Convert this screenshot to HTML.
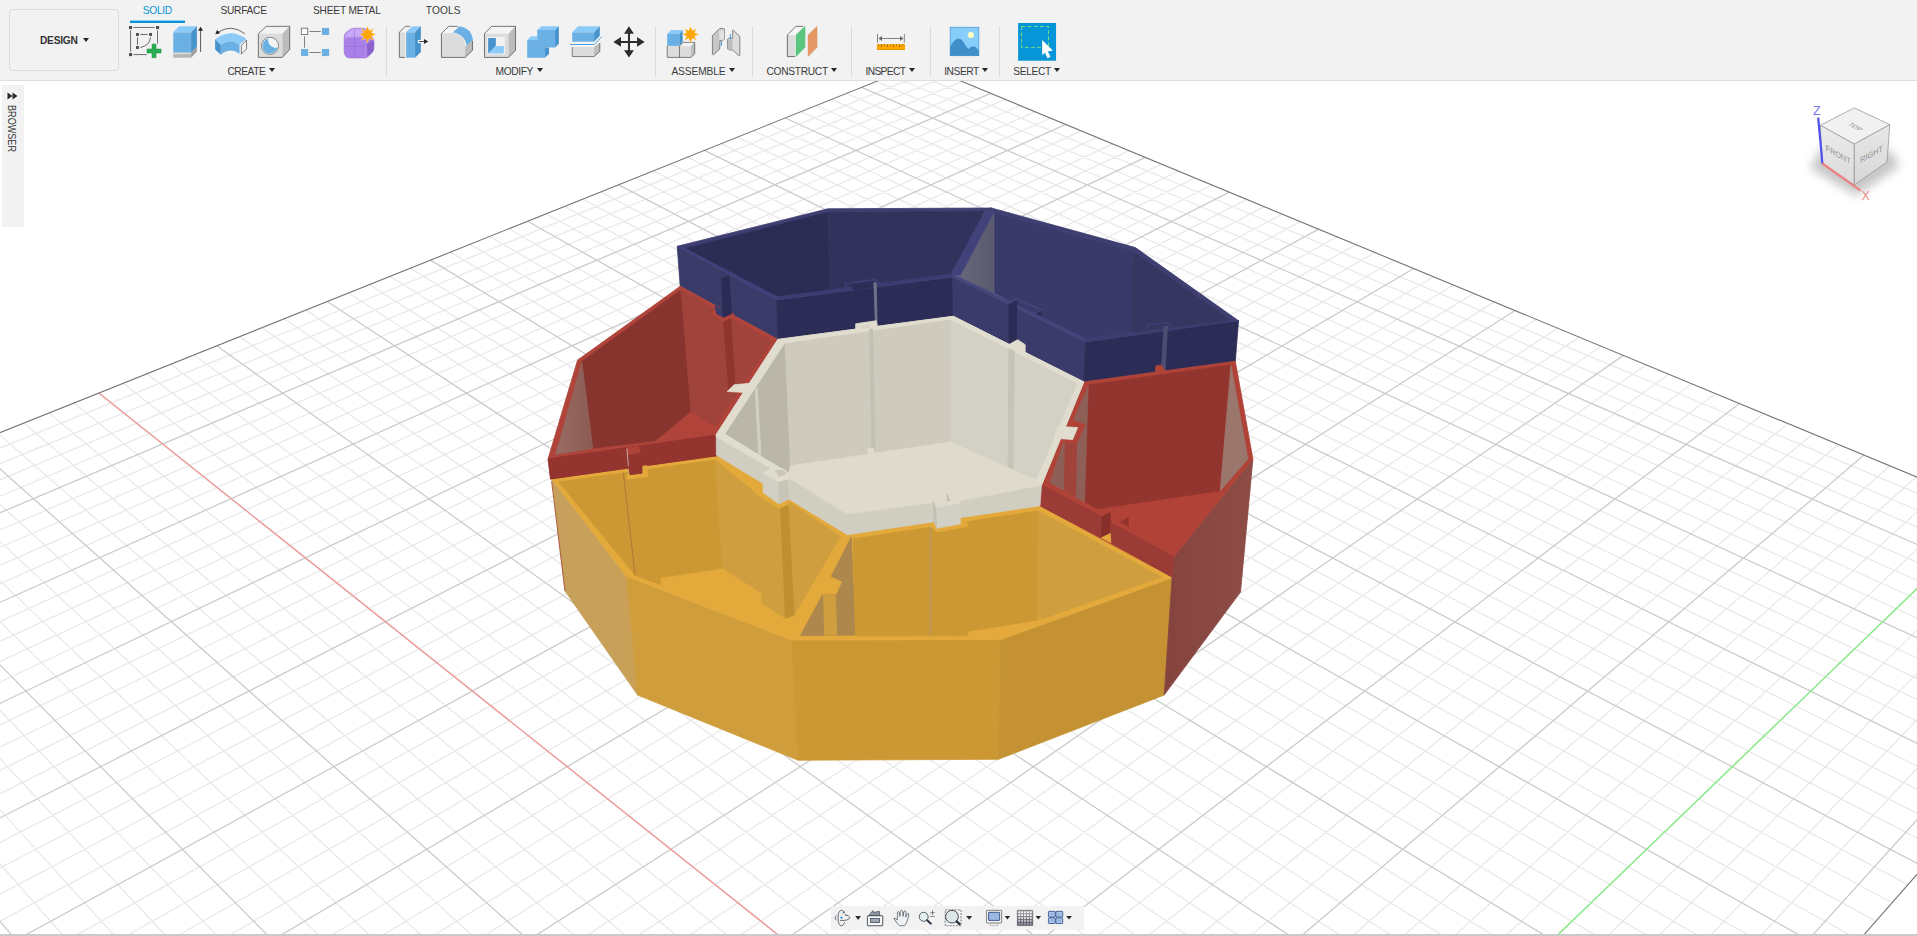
<!DOCTYPE html>
<html lang="en">
<head>
<meta charset="utf-8">
<title>Fusion Design</title>
<style>
html,body{margin:0;padding:0;}
body{width:1917px;height:936px;overflow:hidden;background:#fff;position:relative;font-family:"Liberation Sans",sans-serif;color:#3c3c3c;}
#canvas{position:absolute;left:0;top:0;width:1917px;height:936px;}
#toolbar{position:absolute;left:0;top:0;width:1917px;height:80px;background:#f2f2f2;border-bottom:1px solid #dddddd;box-sizing:content-box;}
.t{position:absolute;font-size:10.2px;line-height:12px;white-space:nowrap;color:#3a3a3a;}
.tab{top:4.9px;}
.grp{top:66px;}
.arr{position:absolute;width:0;height:0;border-left:3.1px solid transparent;border-right:3.1px solid transparent;border-top:4.7px solid #262626;}
.sep{position:absolute;top:26px;width:1.6px;height:50px;background:#dadada;margin-left:-0.5px;}
#design{position:absolute;left:9.3px;top:8.9px;width:110.2px;height:61.8px;border:1.7px solid #dcdcdc;border-radius:5px;box-sizing:border-box;}
.ic{position:absolute;}
#browser{position:absolute;left:2px;top:85px;width:22px;height:142px;background:#f2f2f2;}
#browser .lbl{position:absolute;left:16.1px;top:19.7px;transform-origin:0 0;transform:rotate(90deg) scale(0.866,1);font-size:10.5px;line-height:12px;color:#333;white-space:nowrap;}
#navbar{position:absolute;left:831px;top:906px;width:253px;height:24px;background:#f2f2f2;}
#botbar{position:absolute;left:0;top:934px;width:1917px;height:2px;background:#cacaca;}
</style>
</head>
<body>
<svg id="canvas" width="1917" height="936" viewBox="0 0 1917 936">
<g fill="none" stroke-width="1.3">
<path d="M-342.7 570.0L885.7 2048.0M-281.5 545.5L966.0 1956.6M-251.6 533.5L1004.3 1913.0M-222.1 521.7L1041.6 1870.6M-193.1 510.1L1077.8 1829.4M-136.4 487.4L1147.1 1750.5M-108.7 476.3L1180.3 1712.7M-81.4 465.3L1212.6 1675.9M-54.6 454.5L1244.1 1640.1M-2.0 433.5L1304.5 1571.4M23.8 423.1L1333.6 1538.3M49.1 413.0L1361.9 1506.1M74.1 403.0L1389.5 1474.6M123.1 383.3L1442.7 1414.1M147.0 373.7L1468.3 1385.0M170.7 364.3L1493.3 1356.5M194.0 354.9L1517.8 1328.7M239.6 336.6L1564.9 1275.1M262.0 327.7L1587.7 1249.2M284.1 318.8L1609.9 1223.8M305.8 310.1L1631.7 1199.1M348.5 293.0L1673.8 1151.2M369.4 284.6L1694.1 1128.0M390.1 276.3L1714.0 1105.4M410.5 268.2L1733.5 1083.2M450.5 252.1L1771.3 1040.2M470.1 244.3L1789.7 1019.3M489.5 236.5L1807.6 998.9M508.6 228.8L1825.2 978.9M546.2 213.8L1859.3 940.1M564.6 206.4L1875.9 921.2M582.8 199.1L1892.1 902.7M600.8 191.9L1908.1 884.6M636.2 177.7L1939.0 849.3M653.5 170.8L1954.1 832.2M670.7 163.9L1968.9 815.4M687.6 157.1L1983.4 798.9M720.9 143.7L2011.6 766.8M737.3 137.2L2025.3 751.1M753.5 130.7L2038.8 735.8M769.5 124.3L2052.1 720.7M800.9 111.7L2078.0 691.3M816.4 105.5L2090.5 676.9M831.7 99.4L2102.9 662.8M846.8 93.3L2115.1 649.0M876.5 81.4L2138.8 622.0M891.1 75.5L2150.4 608.8M905.6 69.7L2161.8 595.8M-363.8 595.4L933.8 69.7M-353.3 608.4L947.8 75.6M-342.7 621.6L962.0 81.4M-331.9 635.0L976.4 87.4M-309.8 662.5L1005.5 99.4M-298.4 676.6L1020.3 105.6M-286.9 691.0L1035.3 111.8M-275.1 705.6L1050.5 118.1M-251.0 735.5L1081.3 130.8M-238.6 750.9L1097.0 137.3M-226.0 766.6L1112.9 143.9M-213.2 782.5L1128.9 150.6M-186.8 815.3L1161.6 164.1M-173.3 832.1L1178.2 171.0M-159.5 849.3L1195.0 177.9M-145.4 866.8L1212.0 185.0M-116.5 902.7L1246.7 199.4M-101.6 921.2L1264.4 206.7M-86.4 940.1L1282.2 214.1M-70.9 959.4L1300.3 221.6M-39.0 999.0L1337.2 236.8M-22.5 1019.5L1355.9 244.6M-5.8 1040.3L1375.0 252.5M11.4 1061.6L1394.2 260.5M46.8 1105.6L1433.5 276.7M65.0 1128.3L1453.5 285.0M83.7 1151.5L1473.7 293.4M102.7 1175.2L1494.3 301.9M142.2 1224.1L1536.2 319.3M162.5 1249.5L1557.5 328.1M183.4 1275.4L1579.2 337.1M204.7 1301.9L1601.2 346.2M249.0 1356.9L1646.0 364.7M271.9 1385.3L1668.8 374.2M295.3 1414.5L1692.0 383.8M319.4 1444.4L1715.6 393.6M369.3 1506.4L1763.6 413.5M395.2 1538.7L1788.2 423.6M421.8 1571.7L1813.1 433.9M449.1 1605.6L1838.3 444.4M506.0 1676.3L1890.0 465.8M535.6 1713.0L1916.4 476.7M566.0 1750.8L1943.2 487.8M597.3 1789.7L1970.4 499.1M662.5 1870.8L2026.1 522.2M696.6 1913.2L2054.5 534.0M731.7 1956.8L2083.5 546.0M767.9 2001.7L2112.8 558.1" stroke="#e9e9e9"/>
<path d="M-311.9 557.7L926.4 2001.6M-164.6 498.6L1112.9 1789.4M-28.1 443.9L1274.7 1605.3M98.8 393.1L1416.4 1444.0M216.9 345.7L1541.6 1301.6M327.3 301.5L1652.9 1174.9M430.6 260.1L1752.6 1061.4M527.5 221.3L1842.4 959.3M618.6 184.8L1923.7 866.8M704.4 150.4L1997.6 782.7M785.3 118.0L2065.1 705.8M861.7 87.3L2127.1 635.4M-320.9 648.6L990.9 93.4M-263.2 720.4L1065.8 124.4M-200.1 798.8L1145.2 157.3M-131.1 884.6L1229.3 192.1M-55.1 979.0L1318.6 229.1M28.9 1083.4L1413.7 268.5M122.2 1199.4L1515.1 310.5M226.6 1329.1L1623.4 355.4M344.0 1475.0L1739.4 403.4M477.2 1640.5L1864.0 455.0M629.4 1829.7L1998.0 510.6M805.2 2048.1L2142.7 570.5" stroke="#cbcbcb"/>
<path d="M98.8 393.1L1416.4 1444.0" stroke="#f49a9a"/>
<path d="M629.4 1829.7L1998.0 510.6" stroke="#88f088" stroke-width="1.4"/>
<path d="M-374.1 582.6L919.9 64.0L2173.0 583.1L843.6 2095.9Z" stroke="#747474" stroke-width="1.1"/>
</g>
<g id="model">
<defs>
<linearGradient id="gt1" x1="0" y1="0" x2="1" y2="0"><stop offset="0" stop-color="#67667a"/><stop offset="1" stop-color="#5a596e"/></linearGradient>
<linearGradient id="gr1" x1="0" y1="0" x2="1" y2="0"><stop offset="0" stop-color="#9a6c63"/><stop offset="1" stop-color="#8b5b53"/></linearGradient>
<linearGradient id="gr2" x1="0" y1="0" x2="1" y2="0"><stop offset="0" stop-color="#84443d"/><stop offset="1" stop-color="#8e4c46"/></linearGradient>
<linearGradient id="gy1" x1="0" y1="0" x2="1" y2="0"><stop offset="0" stop-color="#c6a05c"/><stop offset="1" stop-color="#caa057"/></linearGradient>
</defs>
<polygon points="679.2,247.3 827.9,211.5 830.5,290.6 776.6,297.1" fill="#2c2c55" stroke="#2c2c55" stroke-width="0.8" stroke-linejoin="round"/>
<polygon points="827.9,211.5 985.2,210.5 951.9,275.6 830.5,290.6" fill="#32335d" stroke="#32335d" stroke-width="0.8" stroke-linejoin="round"/>
<polygon points="993.9,212.0 1132.9,250.6 1131.6,335.1 1085.3,341.4 993.9,293.1" fill="#3a3a6a" stroke="#3a3a6a" stroke-width="0.8" stroke-linejoin="round"/>
<polygon points="1132.9,250.6 1231.8,320.1 1231.0,323.1 1131.6,335.1" fill="#363661" stroke="#363661" stroke-width="0.8" stroke-linejoin="round"/>
<polygon points="959.1,276.6 993.9,213.0 993.9,294.1" fill="url(#gt1)" stroke="#62617a" stroke-width="0.8" stroke-linejoin="round"/>
<polygon points="950.1,275.6 960.1,275.6 993.9,212.5 986.4,208.8" fill="#42427a" stroke="#42427a" stroke-width="0.8" stroke-linejoin="round"/>
<polygon points="677.2,246.3 827.9,208.8 991.4,208.0 985.2,210.5 827.9,211.5 684.7,248.1" fill="#3e3e71" stroke="#3e3e71" stroke-width="0.8" stroke-linejoin="round"/>
<polygon points="986.4,208.8 991.4,208.0 1135.4,247.6 1238.5,320.7 1231.8,320.6 1132.9,250.6 993.9,212.0" fill="#3e3e71" stroke="#3e3e71" stroke-width="0.8" stroke-linejoin="round"/>
<polygon points="677.2,246.3 776.6,300.0 777.9,339.4 680.2,286.3" fill="#3b3b6a" stroke="#3b3b6a" stroke-width="0.8" stroke-linejoin="round"/>
<polygon points="677.2,246.3 776.6,300.0 777.6,296.9 684.7,248.1" fill="#40407a" stroke="#40407a" stroke-width="0.8" stroke-linejoin="round"/>
<polygon points="721.5,278.8 729.0,275.6 731.5,313.8 723.4,317.3" fill="#2b2c55" stroke="#2b2c55" stroke-width="0.8" stroke-linejoin="round"/>
<polygon points="776.6,300.0 952.8,276.9 953.4,316.3 777.9,339.4" fill="#2c2d56" stroke="#2c2d56" stroke-width="0.8" stroke-linejoin="round"/>
<polygon points="777.6,296.9 951.8,273.9 952.8,276.9 776.6,300.0" fill="#3c3c72" stroke="#3c3c72" stroke-width="0.8" stroke-linejoin="round"/>
<polygon points="853.2,289.8 852.6,285.0 873.9,281.9 874.5,286.9" fill="#2c2d56" stroke="#2c2d56" stroke-width="0.8" stroke-linejoin="round"/>
<polygon points="873.9,282.5 876.2,283.0 877.2,325.1 875.4,325.1" fill="#74738a" stroke="#74738a" stroke-width="0.8" stroke-linejoin="round"/>
<polygon points="952.8,276.9 1085.7,342.0 1083.8,381.9 953.4,316.3" fill="#3a3a6b" stroke="#3a3a6b" stroke-width="0.8" stroke-linejoin="round"/>
<polygon points="952.8,273.9 1085.7,338.5 1085.7,342.0 952.8,276.9" fill="#45457c" stroke="#45457c" stroke-width="0.8" stroke-linejoin="round"/>
<polygon points="1009.1,304.0 1016.6,301.3 1016.6,340.7 1009.1,344.1" fill="#2c2d56" stroke="#2c2d56" stroke-width="0.8" stroke-linejoin="round"/>
<polygon points="1034.6,312.5 1041.5,309.4 1041.5,316.0" fill="#2c2d56" stroke="#2c2d56" stroke-width="0.8" stroke-linejoin="round"/>
<polygon points="1085.7,342.0 1238.5,320.7 1235.3,361.3 1083.8,381.9" fill="#2c2d56" stroke="#2c2d56" stroke-width="0.8" stroke-linejoin="round"/>
<polygon points="1085.7,338.5 1231.8,320.6 1238.5,320.7 1085.7,342.0" fill="#3d3d70" stroke="#3d3d70" stroke-width="0.8" stroke-linejoin="round"/>
<polygon points="1164.0,326.3 1167.5,326.3 1165.2,370.1 1161.5,368.9" fill="#4d4d74" stroke="#4d4d74" stroke-width="0.8" stroke-linejoin="round"/>
<polyline points="845.2,290.0 846.0,283.3 875.3,279.5 880.8,284.5" fill="none" stroke="#40407a" stroke-width="1.3"/>
<polyline points="1009.2,302.1 1016.7,298.8 1041.8,310.1 1034.3,313.1" fill="none" stroke="#45457c" stroke-width="1.3"/>
<polyline points="1146.9,329.6 1148.2,324.3 1168.2,322.6 1172.0,327.6" fill="none" stroke="#40407a" stroke-width="1.3"/>
<polygon points="551.9,479.4 626.4,576.3 637.6,695.1 565.0,591.0" fill="url(#gy1)" stroke="#c8a05a" stroke-width="0.8" stroke-linejoin="round"/>
<polygon points="626.4,576.3 791.6,640.1 797.9,760.2 637.6,695.1" fill="#d09d3c" stroke="#d09d3c" stroke-width="0.8" stroke-linejoin="round"/>
<polygon points="791.6,640.1 1000.7,639.6 998.5,759.3 797.9,760.2" fill="#cb9834" stroke="#cb9834" stroke-width="0.8" stroke-linejoin="round"/>
<polygon points="1000.7,639.6 1172.9,577.5 1164.2,695.1 998.5,759.3" fill="#c49232" stroke="#c49232" stroke-width="0.8" stroke-linejoin="round"/>
<polyline points="551.6,481.0 565.0,591.0" fill="none" stroke="#a8523f" stroke-width="0.9"/>
<polygon points="551.9,479.4 550.6,478.9 717.2,455.7 716.3,455.1 847.6,534.7 1040.0,505.7 1172.1,576.9 1172.9,577.5 1000.7,639.6 791.6,640.1 626.4,576.3" fill="#e3a93b" stroke="#e3a93b" stroke-width="0.8" stroke-linejoin="round"/>
<polygon points="558.8,482.0 715.3,460.1 722.8,568.2 660.2,577.6 660.2,584.5 635.1,575.1" fill="#cb9833" stroke="#cb9833" stroke-width="0.8" stroke-linejoin="round"/>
<polyline points="623.3,472.5 635.1,575.1" fill="none" stroke="#b56a3c" stroke-width="0.8"/>
<polygon points="715.3,460.1 756.6,493.9 780.4,504.6 787.9,501.4 840.5,536.4 794.1,615.2 785.4,618.2 761.6,603.2 761.6,593.2 722.8,568.2" fill="#cf9f3f" stroke="#cf9f3f" stroke-width="0.8" stroke-linejoin="round"/>
<polygon points="780.4,504.6 787.9,501.4 794.1,615.2 785.4,618.2" fill="#c09030" stroke="#c09030" stroke-width="0.8" stroke-linejoin="round"/>
<polygon points="851.2,537.1 855.5,635.1 800.4,635.6 822.4,595.0 836.7,594.7 842.5,581.4 831.2,576.4" fill="#ad874c" stroke="#ad874c" stroke-width="0.8" stroke-linejoin="round"/>
<polygon points="823.4,595.0 835.5,595.0 836.7,635.1 824.7,635.1" fill="#cf9f3f" stroke="#cf9f3f" stroke-width="0.8" stroke-linejoin="round"/>
<polygon points="853.2,539.0 1038.2,511.0 1037.4,620.1 967.6,631.3 967.6,635.8 855.5,635.8" fill="#cb9833" stroke="#cb9833" stroke-width="0.8" stroke-linejoin="round"/>
<polyline points="930.5,527.0 930.5,635.0" fill="none" stroke="#b99a5c" stroke-width="1.6"/>
<polygon points="1038.2,511.0 1161.5,576.9 1038.8,620.1" fill="#cf9f3f" stroke="#cf9f3f" stroke-width="0.8" stroke-linejoin="round"/>
<polygon points="933.3,522.0 936.4,528.2 960.2,523.8 960.8,517.6 965.2,517.1 967.9,526.3 937.7,532.2 930.4,526.3" fill="#e3a93b" stroke="#e3a93b" stroke-width="0.8" stroke-linejoin="round"/>
<polygon points="755.1,493.2 763.2,489.1 763.2,492.6 778.9,503.9 788.3,499.5 788.5,504.1 779.1,508.6" fill="#e3a93b" stroke="#e3a93b" stroke-width="0.8" stroke-linejoin="round"/>
<polygon points="680.2,286.3 777.9,339.4 716.3,434.4 717.2,455.7 550.6,478.9 548.1,458.8 577.6,360.1" fill="#b0443a" stroke="#b0443a" stroke-width="0.8" stroke-linejoin="round"/>
<polygon points="680.2,290.6 581.3,362.0 592.6,448.2 655.2,440.7 690.9,411.3 688.4,380.0" fill="#87342f" stroke="#87342f" stroke-width="0.8" stroke-linejoin="round"/>
<polygon points="581.9,362.6 592.6,448.2 555.6,454.5" fill="url(#gr1)" stroke="#92645b" stroke-width="0.8" stroke-linejoin="round"/>
<polygon points="681.5,290.6 771.6,341.3 715.3,425.7 690.9,411.3 688.4,380.0" fill="#9f433b" stroke="#9f433b" stroke-width="0.8" stroke-linejoin="round"/>
<polygon points="723.4,320.3 730.5,317.6 735.0,385.0 729.0,392.0" fill="#8f352e" stroke="#8f352e" stroke-width="0.8" stroke-linejoin="round"/>
<polygon points="548.1,458.8 715.9,435.1 717.2,455.7 550.6,478.9" fill="#93342e" stroke="#93342e" stroke-width="0.8" stroke-linejoin="round"/>
<polygon points="626.4,448.2 638.9,446.3 640.2,452.6 627.6,454.5" fill="#b0443a" stroke="#b0443a" stroke-width="0.8" stroke-linejoin="round"/>
<polyline points="626.9,448.6 629.1,474.1" fill="none" stroke="#cdb4ae" stroke-width="0.9"/>
<polygon points="627.6,474.7 642.0,473.1 642.0,466.3 646.7,465.7 647.9,476.4 626.4,479.1" fill="#e3a93b" stroke="#e3a93b" stroke-width="0.8" stroke-linejoin="round"/>
<polygon points="628.3,466.3 642.0,464.8 642.0,473.2 630.1,474.7" fill="#93342e" stroke="#93342e" stroke-width="0.8" stroke-linejoin="round"/>
<polygon points="709.6,313.2 715.3,309.8 733.4,313.2 733.4,316.5 723.4,321.2" fill="#b0443a" stroke="#b0443a" stroke-width="0.8" stroke-linejoin="round"/>
<polygon points="715.0,305.7 721.8,309.4 723.4,317.3 716.5,313.8" fill="#3b3b6a" stroke="#3b3b6a" stroke-width="0.8" stroke-linejoin="round"/>
<polygon points="721.5,307.5 730.9,307.5 731.5,313.8 723.4,317.3" fill="#2b2c55" stroke="#2b2c55" stroke-width="0.8" stroke-linejoin="round"/>
<polygon points="1174.0,556.4 1252.9,458.9 1240.5,592.0 1164.2,695.1 1172.1,576.9" fill="url(#gr2)" stroke="#894841" stroke-width="0.8" stroke-linejoin="round"/>
<polygon points="1083.8,381.9 1235.3,361.3 1252.9,458.9 1174.0,556.4 1172.1,577.0 1040.0,505.7 1041.5,485.1" fill="#b04237" stroke="#b04237" stroke-width="0.8" stroke-linejoin="round"/>
<polygon points="1088.9,385.0 1230.3,365.0 1219.7,490.7 1097.0,508.8 1085.1,501.9 1085.1,477.0" fill="#93352f" stroke="#93352f" stroke-width="0.8" stroke-linejoin="round"/>
<polygon points="1231.0,365.6 1247.9,458.9 1220.3,490.7" fill="#9b766d" stroke="#9b766d" stroke-width="0.8" stroke-linejoin="round"/>
<polygon points="1088.2,386.3 1084.5,501.9 1050.0,482.5 1063.2,443.2 1077.0,442.0 1084.5,424.4 1073.8,419.4" fill="#8d5f57" stroke="#8d5f57" stroke-width="0.8" stroke-linejoin="round"/>
<polygon points="1065.3,442.0 1076.6,442.0 1075.7,496.9 1064.4,490.7" fill="#a0433b" stroke="#a0433b" stroke-width="0.8" stroke-linejoin="round"/>
<polygon points="1041.9,485.0 1102.0,516.9 1101.4,537.6 1040.0,505.7" fill="#9a3b35" stroke="#9a3b35" stroke-width="0.8" stroke-linejoin="round"/>
<polygon points="1102.0,516.9 1110.1,512.6 1110.4,533.2 1101.4,537.6" fill="#87302b" stroke="#87302b" stroke-width="0.8" stroke-linejoin="round"/>
<polygon points="1110.8,522.6 1174.0,557.0 1172.1,577.0 1110.8,542.6" fill="#9a3b35" stroke="#9a3b35" stroke-width="0.8" stroke-linejoin="round"/>
<polygon points="1120.8,521.9 1128.3,517.6 1128.3,526.3" fill="#93352f" stroke="#93352f" stroke-width="0.8" stroke-linejoin="round"/>
<polygon points="1101.4,537.8 1110.4,533.5 1110.8,542.8" fill="#e3a93b" stroke="#e3a93b" stroke-width="0.8" stroke-linejoin="round"/>
<polygon points="1067.6,423.2 1085.1,424.1 1077.0,442.6 1060.1,441.3" fill="#b04237" stroke="#b04237" stroke-width="0.8" stroke-linejoin="round"/>
<polygon points="1155.8,366.0 1161.2,365.0 1165.2,370.6 1155.5,372.3" fill="#b04237" stroke="#b04237" stroke-width="0.8" stroke-linejoin="round"/>
<polygon points="777.9,339.4 953.4,316.3 1083.8,381.9 1041.5,485.1 1040.0,505.7 847.6,534.7 716.3,455.1 716.3,434.4" fill="#d0cdc1" stroke="#d0cdc1" stroke-width="0.8" stroke-linejoin="round"/>
<polygon points="777.9,339.4 953.4,316.3 950.3,320.1 785.0,343.8" fill="#e1ddce" stroke="#e1ddce" stroke-width="0.8" stroke-linejoin="round"/>
<polygon points="953.4,316.3 1083.8,381.9 1076.9,383.8 950.3,320.1" fill="#e1ddce" stroke="#e1ddce" stroke-width="0.8" stroke-linejoin="round"/>
<polygon points="716.3,434.4 777.9,339.4 785.0,343.8 725.7,433.8" fill="#e1ddce" stroke="#e1ddce" stroke-width="0.8" stroke-linejoin="round"/>
<polygon points="1083.8,381.9 1041.5,485.1 1034.5,482.0 1076.9,383.8" fill="#e1ddce" stroke="#e1ddce" stroke-width="0.8" stroke-linejoin="round"/>
<polygon points="716.3,434.4 725.7,433.8 782.6,468.6 771.4,468.6 716.3,436.8" fill="#e1ddce" stroke="#e1ddce" stroke-width="0.8" stroke-linejoin="round"/>
<polygon points="725.7,433.8 785.0,343.8 790.6,465.8 787.6,472.0 782.6,468.6" fill="#bab7aa" stroke="#bab7aa" stroke-width="0.8" stroke-linejoin="round"/>
<polygon points="785.0,343.8 950.3,320.1 950.3,442.1 790.6,465.8" fill="#cecabe" stroke="#cecabe" stroke-width="0.8" stroke-linejoin="round"/>
<polygon points="950.3,320.1 1076.9,383.8 1036.0,480.0 950.3,442.1" fill="#d3d1c5" stroke="#d3d1c5" stroke-width="0.8" stroke-linejoin="round"/>
<polygon points="869.5,329.4 872.6,328.8 875.2,452.1 872.0,452.7" fill="#c3c0b4" stroke="#c3c0b4" stroke-width="0.8" stroke-linejoin="round"/>
<polygon points="1008.9,348.5 1014.2,351.0 1013.0,472.0 1008.0,473.5" fill="#c6c3b7" stroke="#c6c3b7" stroke-width="0.8" stroke-linejoin="round"/>
<polygon points="790.6,465.8 950.3,442.1 1036.0,480.0 1041.5,485.1 961.3,500.6 933.1,502.6 846.7,513.9 790.4,478.8 787.6,480.1" fill="#dfdacb" stroke="#dfdacb" stroke-width="0.8" stroke-linejoin="round"/>
<polygon points="763.2,473.2 771.4,468.2 782.6,468.6 787.6,472.6 787.6,480.1 778.9,482.6" fill="#e1ddce" stroke="#e1ddce" stroke-width="0.8" stroke-linejoin="round"/>
<polygon points="763.2,473.8 778.9,482.6 778.9,503.9 763.2,492.6" fill="#d2d0c4" stroke="#d2d0c4" stroke-width="0.8" stroke-linejoin="round"/>
<polygon points="778.9,482.6 787.6,480.1 788.3,499.5 778.9,503.9" fill="#c8c5b8" stroke="#c8c5b8" stroke-width="0.8" stroke-linejoin="round"/>
<polygon points="755.3,389.5 757.2,387.5 761.0,455.0 758.5,453.5" fill="#d3d0c3" stroke="#d3d0c3" stroke-width="0.8" stroke-linejoin="round"/>
<polygon points="867.8,448.2 873.4,448.2 874.6,452.6 867.8,454.1" fill="#dfdacb" stroke="#dfdacb" stroke-width="0.8" stroke-linejoin="round"/>
<polygon points="775.1,470.7 782.6,470.1 786.4,473.8 778.9,476.6" fill="#c9c6b9" stroke="#c9c6b9" stroke-width="0.8" stroke-linejoin="round"/>
<polygon points="855.7,329.3 855.7,323.8 876.4,320.7 877.2,326.2" fill="#e1ddce" stroke="#e1ddce" stroke-width="0.8" stroke-linejoin="round"/>
<polygon points="862.0,328.8 862.0,325.7 869.5,324.7 869.9,327.6" fill="#d6d3c6" stroke="#d6d3c6" stroke-width="0.8" stroke-linejoin="round"/>
<polygon points="1009.4,344.2 1017.7,339.7 1025.2,344.7 1025.2,353.2 1010.2,345.7" fill="#e1ddce" stroke="#e1ddce" stroke-width="0.8" stroke-linejoin="round"/>
<polygon points="734.1,384.8 752.8,383.1 746.6,392.5 727.2,391.5" fill="#e1ddce" stroke="#e1ddce" stroke-width="0.8" stroke-linejoin="round"/>
<polygon points="1057.6,426.3 1077.6,427.6 1072.6,439.5 1054.4,438.2" fill="#e1ddce" stroke="#e1ddce" stroke-width="0.8" stroke-linejoin="round"/>
<polygon points="933.3,501.3 935.8,508.4 959.6,504.1 957.7,497.8 947.7,493.8" fill="#dfdacb" stroke="#dfdacb" stroke-width="0.8" stroke-linejoin="round"/>
<polygon points="935.8,508.4 959.6,504.1 960.4,523.8 936.7,528.3" fill="#d2d0c4" stroke="#d2d0c4" stroke-width="0.8" stroke-linejoin="round"/>
<polygon points="933.3,501.3 935.8,508.4 936.7,528.3 933.9,522.0" fill="#c4c1b5" stroke="#c4c1b5" stroke-width="0.8" stroke-linejoin="round"/>
<polygon points="947.0,494.1 949.9,500.7 947.2,500.9" fill="#c2bfb2" stroke="#c2bfb2" stroke-width="0.8" stroke-linejoin="round"/>
</g>
<defs><filter id="blur" x="-50%" y="-50%" width="200%" height="200%"><feGaussianBlur stdDeviation="5"/></filter>
<linearGradient id="cf" x1="0" y1="0" x2="0" y2="1"><stop offset="0" stop-color="#ececec"/><stop offset="1" stop-color="#dadada"/></linearGradient>
<linearGradient id="cr" x1="0" y1="0" x2="0" y2="1"><stop offset="0" stop-color="#e8e8e8"/><stop offset="1" stop-color="#d6d6d6"/></linearGradient></defs>
<g id="viewcube">
<path d="M1810 168L1856 196L1900 166L1890 150L1820 150Z" fill="#9a9a9a" opacity="0.55" filter="url(#blur)"/>
<path d="M1820.3 125.3L1854.3 107.9L1889.8 124.6L1854.3 144.1Z" fill="#f1f1f1" stroke="#8e8e8e" stroke-width="0.7" stroke-linejoin="round"/>
<path d="M1820.3 125.3L1854.3 144.1V185L1822.4 163.5Z" fill="url(#cf)" stroke="#8e8e8e" stroke-width="0.7" stroke-linejoin="round"/>
<path d="M1854.3 144.1L1889.8 124.6L1887 162.1L1854.3 185Z" fill="url(#cr)" stroke="#8e8e8e" stroke-width="0.7" stroke-linejoin="round"/>
<path d="M1822.4 163.5L1818.2 117.7" stroke="#5050ee" stroke-width="2.2"/>
<path d="M1822.4 163.5L1860.6 190.6" stroke="#ee8080" stroke-width="2.2"/>
<g font-family="'Liberation Sans',sans-serif" font-size="8.3" fill="#8e8e8e" text-anchor="middle">
<text transform="matrix(0.875,0.484,0.055,1,1838.2,157.5)">FRONT</text>
<text transform="matrix(0.876,-0.481,0,1,1871.6,157)">RIGHT</text>
<text transform="matrix(0.875,0.484,-0.89,0.455,1853.2,128)" font-size="7">TOP</text>
</g>
<text x="1813" y="115" font-family="'Liberation Sans',sans-serif" font-size="12.5" fill="#7676f2">Z</text>
<text x="1861.5" y="199.6" font-family="'Liberation Sans',sans-serif" font-size="12.5" fill="#f28a8a">X</text>
</g>

</svg>
<div id="toolbar">
<div id="design"></div>
<div class="t" style="left:40.0px;top:35px;font-weight:bold;color:#333;letter-spacing:-0.24px;">DESIGN</div><div class="arr" style="left:82.8px;top:37.8px;"></div>
<div class="t tab" style="left:142.7px;color:#0696d7;letter-spacing:-0.26px;">SOLID</div>
<div style="position:absolute;left:130.3px;top:20.3px;width:54.3px;height:3.2px;background:linear-gradient(#8ccdf0 0,#8ccdf0 18%,#0696d7 26%);border-radius:0.5px;"></div>
<div class="t tab" style="left:220.4px;letter-spacing:-0.25px;">SURFACE</div>
<div class="t tab" style="left:313.0px;letter-spacing:-0.20px;">SHEET METAL</div>
<div class="t tab" style="left:425.7px;letter-spacing:0.15px;">TOOLS</div>
<div class="t grp" style="left:227.4px;letter-spacing:-0.43px;">CREATE</div><div class="arr" style="left:268.8px;top:67.6px;"></div>
<div class="t grp" style="left:495.6px;letter-spacing:-0.39px;">MODIFY</div><div class="arr" style="left:536.8px;top:67.6px;"></div>
<div class="t grp" style="left:671.4px;letter-spacing:-0.10px;">ASSEMBLE</div><div class="arr" style="left:728.8px;top:67.6px;"></div>
<div class="t grp" style="left:766.5px;letter-spacing:-0.29px;">CONSTRUCT</div><div class="arr" style="left:830.8px;top:67.6px;"></div>
<div class="t grp" style="left:865.4px;letter-spacing:-0.59px;">INSPECT</div><div class="arr" style="left:908.8px;top:67.6px;"></div>
<div class="t grp" style="left:944.2px;letter-spacing:-0.43px;">INSERT</div><div class="arr" style="left:981.8px;top:67.6px;"></div>
<div class="t grp" style="left:1013.2px;letter-spacing:-0.31px;">SELECT</div><div class="arr" style="left:1053.8px;top:67.6px;"></div>
<div class="sep" style="left:386px;"></div>
<div class="sep" style="left:655px;"></div>
<div class="sep" style="left:752px;"></div>
<div class="sep" style="left:851px;"></div>
<div class="sep" style="left:930px;"></div>
<div class="sep" style="left:999px;"></div>
<svg class="ic" style="left:126px;top:20px" width="128" height="42" viewBox="0 0 1917 629">
<g fill="#4a4a4a"><rect x="45" y="90" width="46" height="46"/><rect x="450" y="90" width="46" height="46"/><rect x="45" y="495" width="46" height="46"/><rect x="150" y="195" width="43" height="43"/><rect x="347" y="195" width="43" height="43"/><rect x="150" y="390" width="43" height="43"/></g>
<g fill="none" stroke="#4a4a4a" stroke-width="12"><path d="M110 112H430M68 155V475M472 155V355M110 518H310M215 217H325M172 260V370M368 260Q355 385 215 412"/></g>
<path d="M390 360h60v75h75v60h-75v70h-60v-70h-75v-60h75z" fill="#28ad50" stroke="#1f9745" stroke-width="8"/>
<path d="M708 185L795 92H1062L975 185Z" fill="#8ccbf8"/><path d="M708 185H975V490H708Z" fill="#6ab0e4"/><path d="M975 185L1062 92V400L975 490Z" fill="#4793cc"/>
<path d="M708 490H975V565H708Z" fill="#b6b6b6"/><path d="M708 490H975V512H708Z" fill="#dadada"/><path d="M975 490L1062 400V470L975 565Z" fill="#9c9c9c"/>
<path d="M1117 150V478" stroke="#222" stroke-width="11"/><path d="M1080 162L1117 100L1154 162Z" fill="#222"/>
<path d="M1335 290Q1560 110 1805 285L1700 372Q1560 262 1420 375Z" fill="#8ccbf8"/>
<path d="M1420 375Q1560 262 1700 372V505Q1560 405 1420 520Z" fill="#6ab0e4"/>
<path d="M1335 290L1420 375V520L1335 440Z" fill="#4793cc"/>
<path d="M1728 382L1806 300V430L1728 512Z" fill="#f4f4f4" stroke="#555" stroke-width="11"/>
<path d="M1780 205Q1580 55 1385 180" fill="none" stroke="#222" stroke-width="10"/><path d="M1338 212L1362 148L1412 198Z" fill="#222"/>
</svg>
<svg class="ic" style="left:254px;top:20px" width="128" height="42" viewBox="0 0 1917 629">
<path d="M65 205L185 95H535L425 205Z" fill="#f2f2f2"/><path d="M65 205H425V560H65Z" fill="#dcdcdc"/><path d="M425 205L535 95V440L425 560Z" fill="#bcbcbc"/>
<path d="M65 205L185 95H535V440L425 560H65Z" fill="none" stroke="#555" stroke-width="12" stroke-linejoin="round"/>
<circle cx="240" cy="387" r="128" fill="#f4f4f4" stroke="#555" stroke-width="10"/>
<path d="M215 280A113 113 0 1 0 350 415A115 115 0 0 1 215 280Z" fill="#6ab0e4"/>
<rect x="708" y="122" width="97" height="96" fill="#fff" stroke="#555" stroke-width="11"/>
<g fill="#6ab0e4" stroke="#5aa3dc" stroke-width="6"><rect x="1020" y="122" width="102" height="100"/><rect x="708" y="437" width="100" height="100"/><rect x="1020" y="437" width="102" height="100"/></g>
<path d="M830 172H1000M757 245V415M830 487H1000" stroke="#555" stroke-width="11"/>
<path d="M1350 260Q1350 200 1400 170L1460 130Q1480 122 1520 122H1610Q1700 122 1745 200L1795 300Q1800 330 1795 440Q1790 470 1760 500L1700 555Q1680 570 1640 570H1450Q1350 570 1350 470Z" fill="#a980e8" stroke="#9468d4" stroke-width="8"/>
<path d="M1362 262Q1362 205 1408 178L1462 140Q1482 132 1520 132H1605Q1660 132 1690 170L1650 250H1420Q1370 250 1362 290Z" fill="#c9a8f8"/>
<path d="M1690 360L1790 300Q1795 330 1790 440Q1786 468 1758 495L1700 548Z" fill="#8b62cc"/>
<path d="M1505 135V560M1360 392Q1520 410 1690 385M1745 300V500" fill="none" stroke="#8f68cf" stroke-width="7"/>
<path d="M1380 300Q1380 262 1420 262H1640Q1675 262 1675 300V500Q1675 545 1630 548" fill="none" stroke="#c4a6f2" stroke-width="8" opacity="0.8"/>
<path d="M1700 95L1728 160L1790 128L1758 190L1822 215L1758 242L1790 305L1728 272L1700 340L1672 272L1610 305L1642 242L1578 215L1642 190L1610 128L1672 160Z" fill="#ffa500" stroke="#fbe6c0" stroke-width="5"/>
</svg>
<svg class="ic" style="left:392px;top:20px" width="128" height="42" viewBox="0 0 1917 629">
<path d="M110 185L200 95H275L200 185Z" fill="#f4f4f4"/><path d="M110 185H200V560H110Z" fill="#dcdcdc"/>
<path d="M195 560H110V185L200 95H270" fill="none" stroke="#555" stroke-width="12"/>
<path d="M212 185L300 92H432L345 185Z" fill="#8ccbf8"/><path d="M212 185H345V565H212Z" fill="#6ab0e4"/><path d="M345 185L432 92V480L345 565Z" fill="#4793cc"/>
<rect x="388" y="298" width="55" height="48" fill="#f8f8f8"/><path d="M405 322H500" stroke="#222" stroke-width="12"/><path d="M480 284L542 322L480 360Z" fill="#222"/>
<path d="M740 200L850 95H990L905 195Z" fill="#f4f4f4"/>
<path d="M740 200H900Q1095 210 1095 400V560H740Z" fill="#dcdcdc"/>
<path d="M1095 400L1205 300V455L1095 560Z" fill="#bcbcbc"/>
<path d="M910 188L1010 92Q1190 120 1212 295L1115 385Q1095 215 910 188Z" fill="#6ab0e4"/>
<path d="M985 95H850L740 200V560H1095L1205 455V310" fill="none" stroke="#555" stroke-width="12" stroke-linejoin="round"/>
<path d="M1385 205L1490 95H1850L1745 205Z" fill="#f4f4f4"/><path d="M1385 205H1745V560H1385Z" fill="#dcdcdc"/><path d="M1745 205L1850 95V455L1745 560Z" fill="#bcbcbc"/>
<path d="M1385 205L1490 95H1850V455L1745 560H1385Z" fill="none" stroke="#555" stroke-width="12" stroke-linejoin="round"/>
<rect x="1425" y="255" width="265" height="260" fill="#f2f2f2"/>
<path d="M1440 270H1555V388L1440 500Z" fill="#4793cc"/><path d="M1440 500L1555 390H1675V500Z" fill="#8ccbf8"/>
</svg>
<svg class="ic" style="left:520px;top:20px" width="128" height="42" viewBox="0 0 1917 629">
<path d="M258 150L320 92H582L525 150Z" fill="#8ccbf8"/><path d="M258 150H525V412H258Z" fill="#6ab0e4"/><path d="M525 150L582 92V355L525 412Z" fill="#4793cc"/>
<path d="M108 300L165 243H258V300Z" fill="#8ccbf8"/><path d="M108 300H375V565H108Z" fill="#6ab0e4"/><path d="M375 412H435V505L375 565Z" fill="#4793cc"/>
<path d="M782 185L870 92H1195L1110 185Z" fill="#8ccbf8"/><path d="M782 185H1110V325H782Z" fill="#6ab0e4"/><path d="M1110 185L1195 92V235L1110 325Z" fill="#4793cc"/>
<path d="M782 405H1110V548H782Z" fill="#dcdcdc"/><path d="M1110 405L1195 340V470L1110 548Z" fill="#bcbcbc"/>
<path d="M782 405V548H1110L1195 470V345" fill="none" stroke="#555" stroke-width="11" stroke-linejoin="round"/>
<path d="M750 367H1115L1225 250" fill="none" stroke="#fdf6ec" stroke-width="34"/>
<path d="M750 367H1115L1225 250" fill="none" stroke="#1e88e5" stroke-width="12"/>
<path d="M1632 150V500M1450 328H1810" stroke="#2d2d2d" stroke-width="30"/>
<path d="M1558 207L1632 92L1706 207ZM1558 452L1632 563L1706 452ZM1512 254L1398 328L1512 402ZM1753 254L1867 328L1753 402Z" fill="#2d2d2d"/>
</svg>
<svg class="ic" style="left:660px;top:20px" width="128" height="42" viewBox="0 0 1917 629">
<path d="M108 210L165 150H340L290 210Z" fill="#8ccbf8"/><path d="M108 210H290V388H108Z" fill="#6ab0e4"/><path d="M290 210L340 150V330L290 388Z" fill="#4793cc"/>
<path d="M108 390H290V560H108Z" fill="#dcdcdc"/><path d="M295 390L350 335H520L465 390Z" fill="#f2f2f2"/><path d="M295 390H465V560H295Z" fill="#dcdcdc"/><path d="M465 390L520 335V505L465 560Z" fill="#bcbcbc"/>
<path d="M108 390V560H465L520 505V335H350L292 390V560" fill="none" stroke="#555" stroke-width="11" stroke-linejoin="round"/>
<path d="M458 92L486 160L548 128L516 190L582 215L516 242L548 305L486 272L458 340L430 272L368 305L400 242L336 215L400 190L368 128L430 160Z" fill="#ffa500" stroke="#fbe6c0" stroke-width="5"/>
<path d="M785 235L888 132Q925 112 965 135V290Q940 310 900 305L895 435L800 522L785 512Z" fill="#c6c6c6" stroke="#555" stroke-width="10" stroke-linejoin="round"/>
<path d="M888 140H962V292Q925 305 888 292Z" fill="#e2e2e2"/><ellipse cx="925" cy="150" rx="32" ry="11" fill="#fafafa" stroke="#888" stroke-width="5"/>
<path d="M1010 290Q1048 250 1088 275V155L1100 155L1195 245V528L1178 535L1088 450Q1048 460 1010 430Z" fill="#dcdcdc" stroke="#555" stroke-width="10" stroke-linejoin="round"/>
<path d="M1015 295Q1050 310 1085 295V445Q1050 455 1015 430Z" fill="#bdbdbd"/>
<path d="M920 315V388M1053 208V295" stroke="#1e88e5" stroke-width="12"/>
</svg>
<svg class="ic" style="left:780px;top:20px" width="128" height="42" viewBox="0 0 1917 629">
<path d="M110 225L240 95H352L225 225Z" fill="#f6f6f6"/><path d="M110 225H225V548H110Z" fill="#dcdcdc"/>
<path d="M225 548H110V225L240 95H345" fill="none" stroke="#555" stroke-width="12"/>
<path d="M240 225L375 95V410L240 548Z" fill="#5bc680" stroke="#4db873" stroke-width="6"/>
<path d="M420 225L555 95V410L420 548Z" fill="#e59866" stroke="#d98d5a" stroke-width="6"/>
<rect x="1452" y="362" width="420" height="86" fill="#ffa500"/><rect x="1452" y="434" width="420" height="14" fill="#e69500"/>
<path d="M1475 365V385M1520 365V402M1565 365V385M1610 365V402M1655 365V385M1700 365V402M1745 365V385M1790 365V402M1835 365V385" stroke="#6b5a1e" stroke-width="11"/>
<path d="M1460 210V340M1862 210V340M1505 277H1820" stroke="#666" stroke-width="12"/>
<path d="M1474 277L1527 238V316ZM1850 277L1797 238V316Z" fill="#666"/>
</svg>
<svg class="ic" style="left:940px;top:20px" width="128" height="42" viewBox="0 0 1917 629">
<rect x="152" y="108" width="430" height="427" fill="#87cefa"/>
<path d="M152 400Q270 200 350 330Q410 430 430 435Q500 340 582 460V535H152Z" fill="#3f8fca"/>
<circle cx="463" cy="225" r="48" fill="#ffffc4" stroke="#8fc8e8" stroke-width="5"/>
<rect x="152" y="108" width="430" height="427" fill="none" stroke="#3f8fca" stroke-width="10"/>
<rect x="1170" y="45" width="568" height="565" fill="#0696d7"/>
<rect x="1220" y="98" width="405" height="312" fill="none" stroke="#7be07b" stroke-width="14" stroke-dasharray="58 34"/>
<path d="M1530 300L1690 455L1615 470L1655 550L1610 572L1572 490L1530 525Z" fill="#fff"/>
</svg>

</div>
<div id="browser"><div class="lbl">BROWSER</div>
<svg style="position:absolute;left:5px;top:7px" width="12" height="8" viewBox="0 0 12 8"><path d="M0.5 0.5 L5.5 4 L0.5 7.5Z M5.5 0.5 L10.5 4 L5.5 7.5Z" fill="#2b2b2b"/></svg>
</div>
<div id="navbar"></div>
<svg class="ic" style="left:828px;top:902px" width="132" height="32" viewBox="0 0 1917 465">
<g fill="none" stroke="#2b3440" stroke-width="10" stroke-linecap="round">
<path d="M240 300Q225 345 195 347Q145 340 145 232Q148 125 195 118Q222 120 232 155"/>
<path d="M120 262Q80 232 120 200M180 268Q300 275 318 228Q300 190 262 188"/>
<path d="M215 158L235 162L238 140M252 200L268 190L250 178" stroke-width="7"/>
</g>
<path d="M195 205L203 222L220 228L203 235L195 252L187 235L170 228L187 222Z" fill="#1e88e5"/>
<path d="M395 205H478L437 262Z" fill="#2b2b2b"/>
<path d="M590 198L652 125L662 152L745 135L752 198Z" fill="#8e96a2" stroke="#2b3440" stroke-width="9" stroke-linejoin="round"/>
<rect x="572" y="200" width="223" height="145" rx="8" fill="#f8f8f8" stroke="#2b3440" stroke-width="12"/>
<rect x="615" y="240" width="135" height="60" fill="#a0a8b8" stroke="#2b3440" stroke-width="10"/>
<path d="M958 240Q985 225 1005 262L1010 180Q1000 140 1020 138Q1040 140 1045 200L1050 140Q1055 118 1072 120Q1092 122 1090 205L1102 140Q1112 125 1128 135Q1138 150 1128 215L1150 172Q1165 160 1175 175Q1170 230 1140 300Q1130 335 1105 345H1040Q1010 330 958 240Z" fill="#eef1f4" stroke="#2b3440" stroke-width="9" stroke-linejoin="round"/>
<path d="M1045 200V215M1090 205V212M1128 215V222" stroke="#2b3440" stroke-width="7"/>
<circle cx="1390" cy="215" r="65" fill="#e2eeee" stroke="#2b3440" stroke-width="11"/>
<path d="M1360 195Q1370 170 1395 168" fill="none" stroke="#fff" stroke-width="10" stroke-linecap="round"/>
<path d="M1440 265L1495 315" stroke="#2b3440" stroke-width="28" stroke-linecap="round"/>
<path d="M1485 155H1552M1518 120V190M1485 210H1552" stroke="#2b3440" stroke-width="8"/>
</svg>
<svg class="ic" style="left:940px;top:902px" width="152" height="32" viewBox="0 0 1917 404">
<rect x="0" y="95" width="270" height="215" fill="#f2f2f2"/>
<rect x="65" y="100" width="200" height="200" fill="none" stroke="#2b3440" stroke-width="8" stroke-dasharray="24 16"/>
<circle cx="150" cy="185" r="80" fill="#dce8e8" stroke="#2b3440" stroke-width="11"/>
<path d="M210 245L245 280" stroke="#2b3440" stroke-width="30" stroke-linecap="round"/>
<path d="M330 178H405L367 225Z" fill="#2b2b2b"/>
<rect x="585" y="105" width="193" height="160" rx="10" fill="#f4f4f4" stroke="#555" stroke-width="9"/>
<rect x="612" y="130" width="140" height="102" rx="6" fill="#9ab8e0" stroke="#1e3a7a" stroke-width="10"/>
<path d="M642 270H722L730 295H632Z" fill="#fff" stroke="#777" stroke-width="6"/>
<path d="M815 178H885L850 222Z" fill="#2b2b2b"/>
<defs><linearGradient id="gg" x1="0" y1="0" x2="0" y2="1"><stop offset="0" stop-color="#9a9aa2"/><stop offset="1" stop-color="#4e4e5a"/></linearGradient></defs>
<rect x="975" y="105" width="195" height="193" rx="6" fill="url(#gg)" stroke="#444" stroke-width="6"/>
<g fill="#fff"><rect x="988" y="118" width="24" height="24"/><rect x="1024" y="118" width="24" height="24"/><rect x="1060" y="118" width="24" height="24"/><rect x="1096" y="118" width="24" height="24"/><rect x="1132" y="118" width="24" height="24"/>
<rect x="988" y="154" width="24" height="24"/><rect x="1024" y="154" width="24" height="24"/><rect x="1060" y="154" width="24" height="24"/><rect x="1096" y="154" width="24" height="24"/><rect x="1132" y="154" width="24" height="24"/></g>
<g fill="#e8e8ee"><rect x="988" y="190" width="24" height="24"/><rect x="1024" y="190" width="24" height="24"/><rect x="1060" y="190" width="24" height="24"/><rect x="1096" y="190" width="24" height="24"/><rect x="1132" y="190" width="24" height="24"/></g>
<g fill="#c4c4d0"><rect x="988" y="226" width="24" height="24"/><rect x="1024" y="226" width="24" height="24"/><rect x="1060" y="226" width="24" height="24"/><rect x="1096" y="226" width="24" height="24"/><rect x="1132" y="226" width="24" height="24"/></g>
<g fill="#a0a0b0"><rect x="988" y="262" width="24" height="24"/><rect x="1024" y="262" width="24" height="24"/><rect x="1060" y="262" width="24" height="24"/><rect x="1096" y="262" width="24" height="24"/><rect x="1132" y="262" width="24" height="24"/></g>
<path d="M1205 178H1275L1240 222Z" fill="#2b2b2b"/>
<g fill="#a8c4e8" stroke="#1e3a7a" stroke-width="9"><rect x="1368" y="118" width="86" height="72" rx="8"/><rect x="1462" y="118" width="86" height="72" rx="8"/><rect x="1368" y="200" width="86" height="72" rx="8"/><rect x="1462" y="200" width="86" height="72" rx="8"/></g>
<g fill="#8fb2e0"><rect x="1395" y="142" width="32" height="24"/><rect x="1489" y="142" width="32" height="24"/><rect x="1395" y="224" width="32" height="24"/><rect x="1489" y="224" width="32" height="24"/></g>
<path d="M1592 178H1665L1628 222Z" fill="#2b2b2b"/>
</svg>

<div id="botbar"></div>
</body></html>
